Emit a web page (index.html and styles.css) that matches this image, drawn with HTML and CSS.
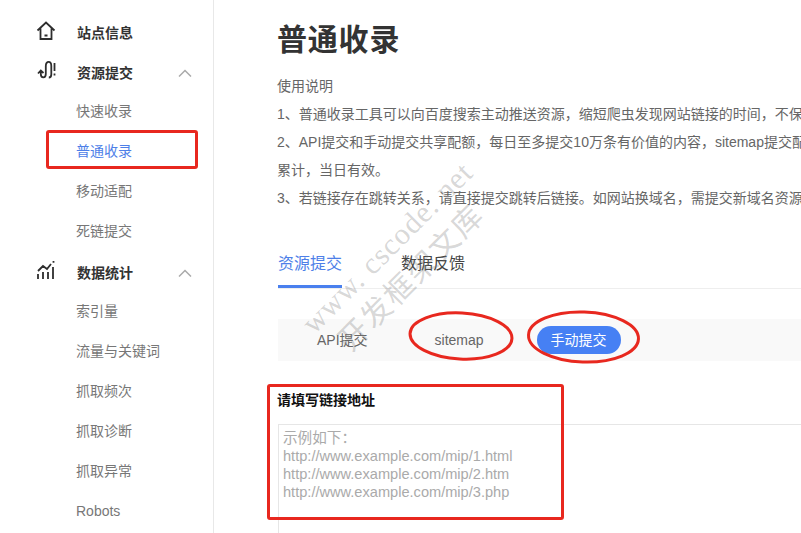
FILE: index.html
```html
<!DOCTYPE html>
<html lang="zh">
<head>
<meta charset="utf-8">
<title>普通收录</title>
<link rel="stylesheet" href="styles.css">
</head>
<body>
<div class="page">
  <nav class="side">
    <div class="group"><svg class="ico" viewBox="0 0 20 20"><path d="M1.500 10.500 10 2.500l8.500 8M4.500 8.500v10.500h11V8.500M8.500 15.500h3"/></svg><span>站点信息</span></div>
    <div class="group"><svg class="ico" viewBox="0 0 20 20"><path d="M2 13.500 4.800 10.500 7.500 13M4.800 11v3c0 4.500 5 4.500 5 0V6c0-5.500 5.500-5.500 5.500 0v8.500c0 2-1 3-2.500 3M18.500 3v8M18.500 13.500v2"/></svg><span>资源提交</span><svg class="chev" viewBox="0 0 14 8"><path d="M1 7.500 7 1.500l6 6"/></svg></div>
    <a class="item">快速收录</a>
    <a class="item on">普通收录</a>
    <a class="item">移动适配</a>
    <a class="item">死链提交</a>
    <div class="group"><svg class="ico" viewBox="0 0 20 20"><path d="M2 19v-5M7 19v-7M12 19v-7M17 19V7M2 11l5-5 4 3 4-5M17.500 1v1.800"/></svg><span>数据统计</span><svg class="chev" viewBox="0 0 14 8"><path d="M1 7.500 7 1.500l6 6"/></svg></div>
    <a class="item">索引量</a>
    <a class="item">流量与关键词</a>
    <a class="item">抓取频次</a>
    <a class="item">抓取诊断</a>
    <a class="item">抓取异常</a>
    <a class="item">Robots</a>
  </nav>
  <main class="main">
    <h1>普通收录</h1>
    <div class="notes">
      <p>使用说明</p>
      <p>1、普通收录工具可以向百度搜索主动推送资源，缩短爬虫发现网站链接的时间，不保</p>
      <p>2、API提交和手动提交共享配额，每日至多提交10万条有价值的内容，sitemap提交配</p>
      <p>累计，当日有效。</p>
      <p>3、若链接存在跳转关系，请直接提交跳转后链接。如网站换域名，需提交新域名资源</p>
    </div>
    <div class="tabs"><span class="tab on">资源提交</span><span class="tab">数据反馈</span></div>
    <div class="modes"><span class="mode api">API提交</span><span class="mode map">sitemap</span><span class="mode btn">手动提交</span></div>
    <div class="label">请填写链接地址</div>
    <div class="area">示例如下：<br>http://www.example.com/mip/1.html<br>http://www.example.com/mip/2.htm<br>http://www.example.com/mip/3.php</div>
  </main>
</div>
<div class="mark box-nav"></div>
<div class="mark box-form"></div>
<svg class="mark rings" viewBox="0 0 801 533"><ellipse cx="461" cy="336" rx="51" ry="23" transform="rotate(3 461 336)"/><ellipse cx="583.500" cy="337" rx="55" ry="25" transform="rotate(2 583.500 337)"/></svg>
<div class="wm wm1">www. cscode. net</div>
<div class="wm wm2">开发框架文库</div>
</body>
</html>
```
FILE: styles.css
```css
html, body { margin: 0; height: 100%; overflow: hidden; background: #fff; }
body { font-family: "Liberation Sans", "Noto Sans CJK SC", sans-serif; color: #666; }
.page { display: flex; height: 533px; width: 801px; overflow: hidden; }
.side { width: 214px; flex: none; box-sizing: border-box; border-right: 1px solid #e8e8e8; padding-top: 12px; font-size: 14px; }
.group { height: 40px; display: flex; align-items: center; position: relative; padding-left: 36px; color: #333; font-weight: 700; font-size: 14px; }
.group span { margin-left: 21px; }
.ico { width: 20px; height: 20px; margin-bottom: 4px; fill: none; stroke: #2e2e2e; stroke-width: 1.800; }
.chev { position: absolute; left: 178px; top: 17px; width: 14px; height: 8px; fill: none; stroke: #aaa; stroke-width: 1.500; }
.item { display: block; height: 40px; line-height: 38px; padding-left: 76px; color: #777; }
.item.on { color: #4e7fe8; }
.main { flex: 1; min-width: 0; padding: 0 0 0 64px; white-space: nowrap; overflow: hidden; }
h1 { margin: 22px 0 0 -1px; font-size: 30px; line-height: 36px; letter-spacing: 0.800px; font-weight: 700; color: #333; }
.notes { margin: 14px 0 0 -1px; font-size: 14px; color: #666; }
.notes p { margin: 0; height: 28px; line-height: 28px; }
.tabs { margin-top: 26px; height: 50px; display: flex; gap: 59px; border-bottom: 1px solid #eee; font-size: 16px; color: #444; }
.tab { line-height: 52px; height: 48px; width: 64px; }
.tab.on { color: #4e7fe8; height: 47px; border-bottom: 3px solid #4a80ee; }
.modes { margin-top: 30px; height: 42px; background: #f9f9f9; display: flex; align-items: center; font-size: 14px; color: #666; }
.mode { line-height: 28px; }
.api { margin-left: 39px; }
.map { margin-left: 67px; }
.btn { margin-left: 53px; width: 84px; text-align: center; border-radius: 14px; background: #4680f4; color: #fff; }
.label { margin: 21px 0 0 -1px; height: 43px; font-size: 14px; line-height: 36px; font-weight: 700; color: #111; }
.area { border: 1px solid #e6e6e6; border-right: 0; margin-top: -1px; height: 200px; padding: 4px 4px; font-size: 14.600px; line-height: 18px; color: #aaa; }
.mark { position: absolute; }
.box-nav { left: 46px; top: 130px; width: 146px; height: 33px; border: 3px solid #e8281f; border-radius: 3px; }
.box-form { left: 267px; top: 384px; width: 291px; height: 130px; border: 3px solid #e8281f; border-radius: 3px; }
.rings { left: 0; top: 0; width: 801px; height: 533px; fill: none; stroke: #e8281f; stroke-width: 3; }
.wm { position: absolute; color: rgba(120,120,120,.3); font-family: "Liberation Serif", "Noto Sans CJK SC", serif; transform: rotate(-45deg); transform-origin: left bottom; white-space: nowrap; }
.wm1 { left: 319px; top: 306px; font-size: 30px; letter-spacing: 1px; }
.wm2 { left: 357px; top: 315px; font-size: 30px; letter-spacing: 2px; }
```
